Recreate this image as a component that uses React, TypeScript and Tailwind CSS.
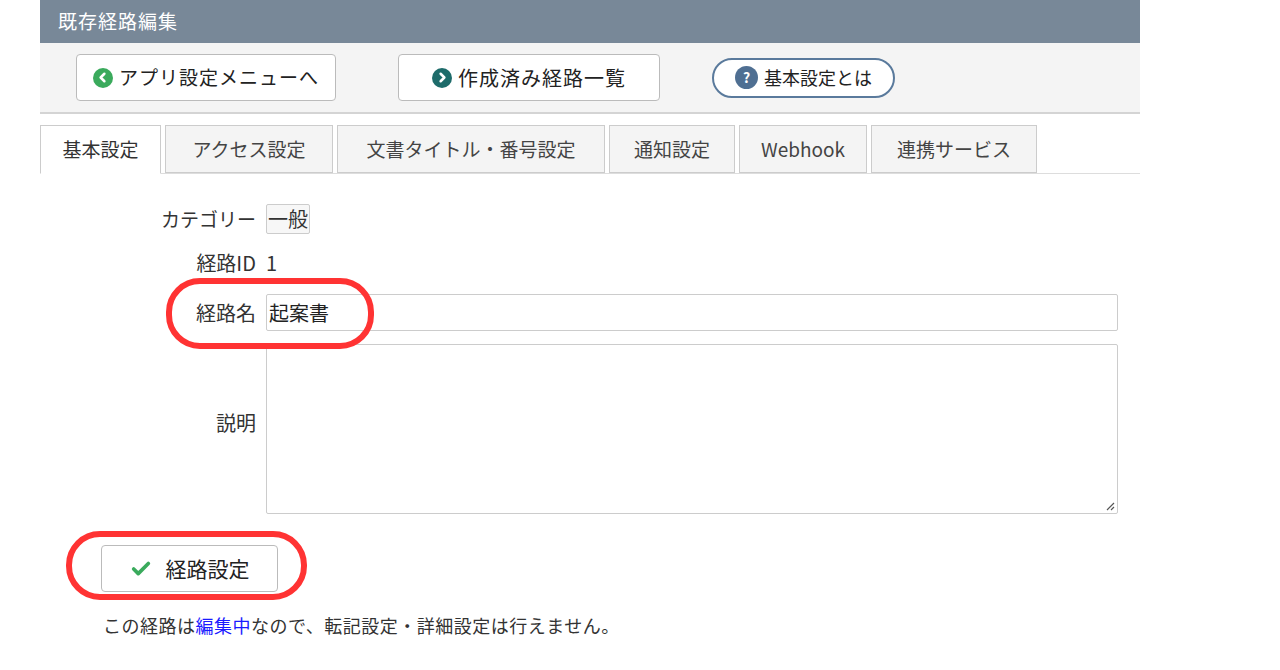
import { Check, ChevronLeft, ChevronRight } from "lucide-react";

const font = { fontFamily: '"Noto Sans CJK JP", "Liberation Sans", sans-serif' };

const tabs = [
    { label: "基本設定", w: "w-[121px]" },
    { label: "アクセス設定", w: "w-[168px]" },
    { label: "文書タイトル・番号設定", w: "w-[268px]" },
    { label: "通知設定", w: "w-[126px]" },
    { label: "Webhook", w: "w-[128px]" },
    { label: "連携サービス", w: "w-[166px]" },
];

export default function App() {
    return (
        <div className="relative w-[1280px] h-[670px] bg-white text-[#333]" style={font}>
            <div className="ml-[40px] w-[1100px]">
                {/* Title bar */}
                <div className="h-[43px] bg-[#788898] text-white text-[19px] tracking-[1px] px-[18px] flex items-center">既存経路編集</div>

                {/* Toolbar */}
                <div className="h-[71px] bg-[#f4f4f4] border-b-2 border-[#d4d4d4] flex items-center pl-[36px] gap-[62px]">
                    <button className="h-[47px] w-[260px] bg-white border border-[#bbb] rounded-[4px] flex items-center justify-center gap-[6px] text-[19px] tracking-[1px] text-[#222]">
                        <span className="w-[20px] h-[20px] rounded-full bg-[#3aaa5c] flex items-center justify-center">
                            <ChevronLeft className="w-[15px] h-[15px] text-white" strokeWidth={4} />
                        </span>
                        アプリ設定メニューへ
                    </button>
                    <button className="h-[47px] w-[262px] bg-white border border-[#bbb] rounded-[4px] flex items-center justify-center gap-[6px] text-[20px] tracking-[1px] text-[#222]">
                        <span className="w-[20px] h-[20px] rounded-full bg-[#1d6b6a] flex items-center justify-center">
                            <ChevronRight className="w-[15px] h-[15px] text-white" strokeWidth={4} />
                        </span>
                        作成済み経路一覧
                    </button>
                    <button className="-ml-[10px] h-[40px] w-[183px] bg-white border-2 border-[#5a7a9c] rounded-full flex items-center justify-center gap-[6px] text-[18px] text-[#222]">
                        <span className="w-[23px] h-[23px] rounded-full bg-[#4f6f92] text-white text-[14px] font-bold flex items-center justify-center">?</span>
                        基本設定とは
                    </button>
                </div>

                {/* Tabs */}
                <div className="mt-[11px] flex items-end gap-[4px] border-b border-[#ddd] h-[49px]">
                    {tabs.map((t, i) => (
                        <div
                            key={t.label}
                            className={
                                i === 0
                                    ? `${t.w} h-[49px] flex items-center justify-center bg-white border border-[#ccc] border-b-white -mb-px text-[19px] text-[#333]`
                                    : `${t.w} h-[48px] flex items-center justify-center bg-[#f4f4f4] border border-[#ccc] text-[19px] text-[#444]`
                            }
                        >
                            {t.label}
                        </div>
                    ))}
                </div>

                {/* Form */}
                <div className="mt-[30px] grid grid-cols-[216px_1fr] gap-x-[10px] items-center text-[20px] w-[1078px]">
                    <div className="text-right text-[19px]">カテゴリー</div>
                    <div>
                        <span className="inline-block border border-[#ccc] rounded-[2px] bg-[#f7f7f7] px-px leading-[28px]">一般</span>
                    </div>

                    <div className="text-right mt-[14px]">経路ID</div>
                    <div className="mt-[14px]">1</div>

                    <div className="text-right mt-[16px]">経路名</div>
                    <div className="mt-[16px] h-[37px] border border-[#ccc] rounded-[2px] flex items-center px-[2px] text-[#222]">起案書</div>

                    <div className="text-right">説明</div>
                    <div className="mt-[13px] h-[170px] border border-[#ccc] rounded-[2px] relative">
                        <svg className="absolute right-[2px] bottom-[2px]" width="10" height="10" viewBox="0 0 10 10">
                            <path d="M9 2 L2 9 M9 6 L6 9" stroke="#555" strokeWidth="1.2" />
                        </svg>
                    </div>
                </div>

                <div className="pl-[61px] mt-[31px]">
                    <button className="h-[47px] w-[177px] bg-white border border-[#bbb] rounded-[4px] flex items-center justify-center gap-[14px] text-[21px] text-[#222]">
                        <Check className="w-[22px] h-[22px] text-[#3aaa5c]" strokeWidth={4} />
                        経路設定
                    </button>
                    <p className="mt-[20px] ml-[2px] text-[18px] tracking-[0.5px] text-[#333]">
                        この経路は<span className="text-[#1a1aff]">編集中</span>なので、転記設定・詳細設定は行えません。
                    </p>
                </div>
            </div>

            {/* Highlight annotations */}
            <div className="absolute left-[166px] top-[278px] w-[208px] h-[71px] border-[6px] border-[#ff3333] rounded-[34px]" />
            <div className="absolute left-[66px] top-[531px] w-[241px] h-[69px] border-[6px] border-[#ff3333] rounded-[34px]" />
        </div>
    );
}
